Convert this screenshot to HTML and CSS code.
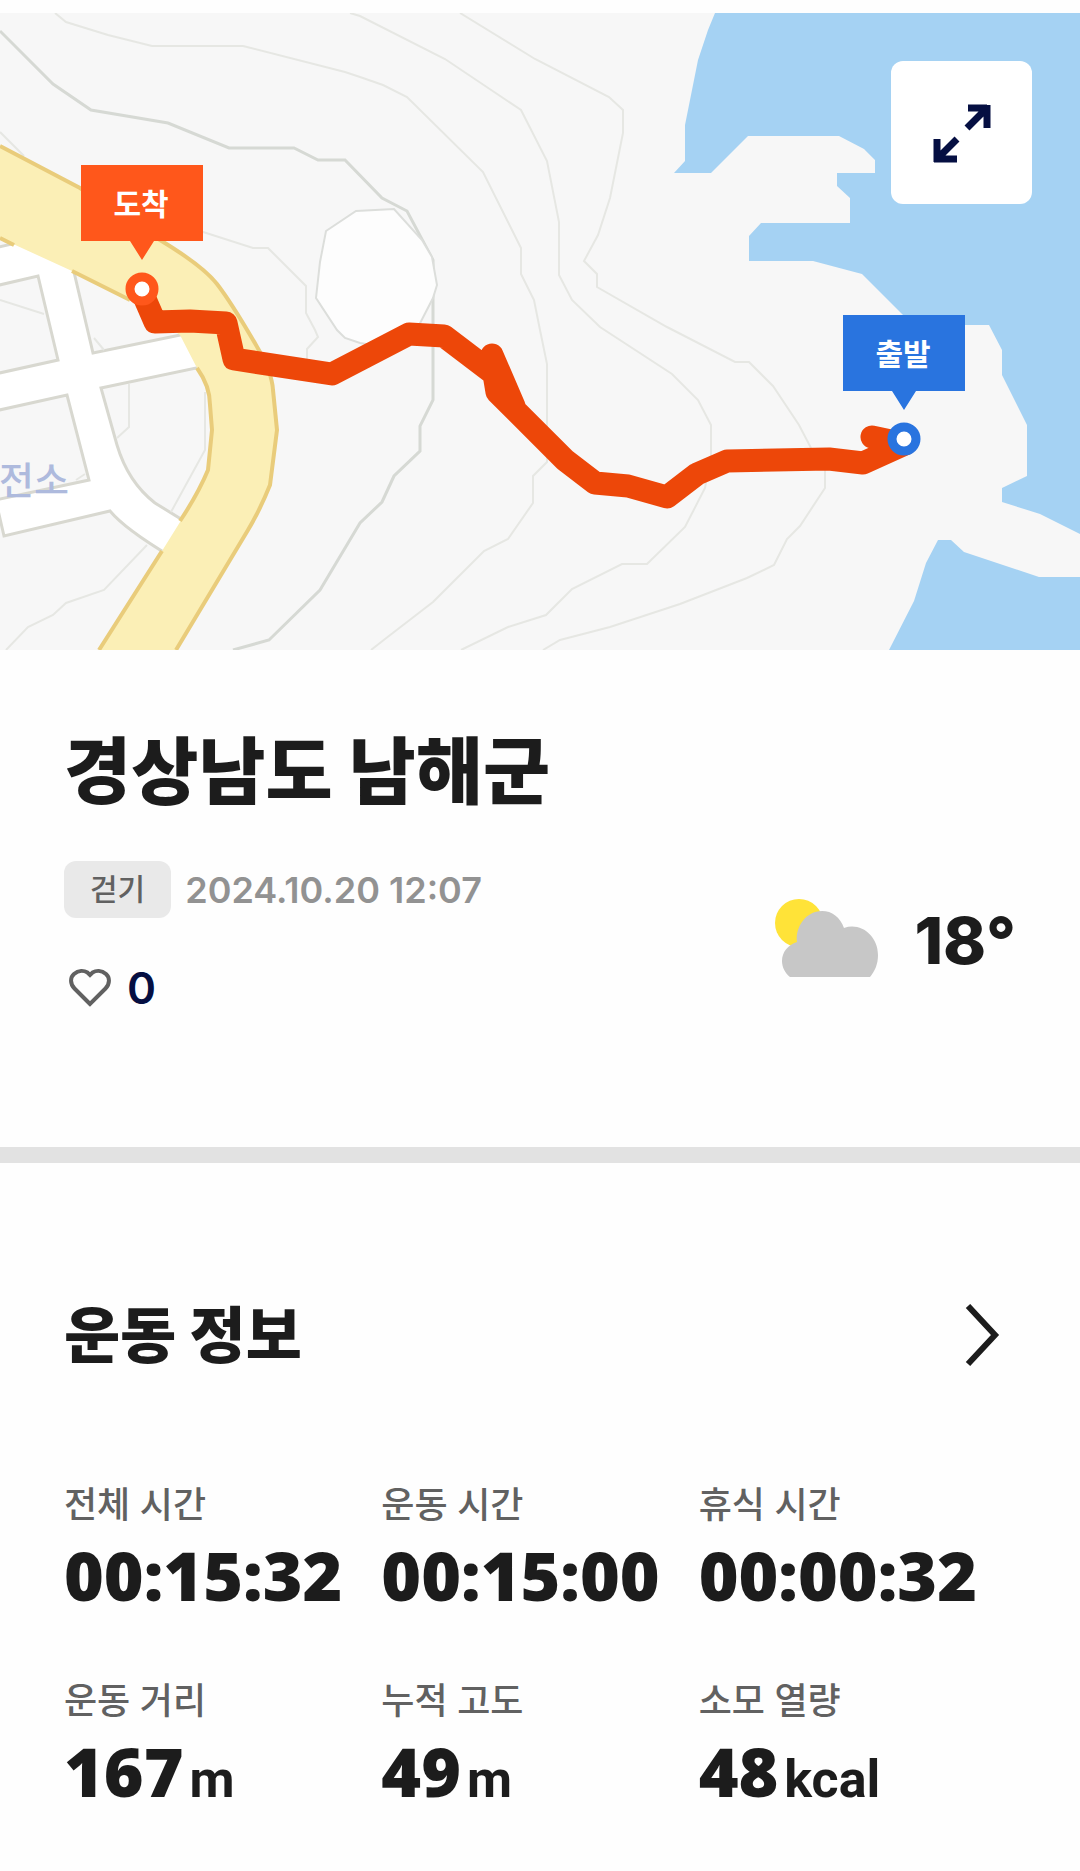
FILE: index.html
```html
<!DOCTYPE html>
<html lang="ko">
<head>
<meta charset="utf-8">
<meta name="viewport" content="width=device-width, initial-scale=1">
<title>경상남도 남해군</title>
<link rel="stylesheet" href="styles.css">
</head>
<body>
<main class="page">
  <section class="map" aria-label="운동 경로">
    <svg class="map-canvas" viewBox="0 13 1080 637" role="img" aria-label="지도">
      <rect class="land" y="13" width="1080" height="637"/>
      <!-- sea -->
      <path class="sea" d="M715 13 708 30 698 60 685 125V161L674 173H711L748 136H839L864 149 875 160V173H837V186L850 198V223H761L749 236V261H813L862 274 913 325H989L1002 350V375L1027 425V476L1002 488V502L1040 514 1080 534V13Z"/>
      <path class="sea" d="M889 650 914 601 926 563 938 540H951L964 552 1039 577H1080V650Z"/>
      <!-- contour lines -->
      <g class="contour">
        <path d="M55 13 66 22 108 35 152 46H243L345 72 360 77 383 85 407 97 483 172 521 248V274L534 300 540 330 547 364V462L533 476V503L508 539 484 551 433 602 385 639 371 650"/>
        <path d="M350 13 360 16 445 59 521 110 547 161 559 222V275L572 300 600 327 672 374 698 400 711 425V455L705 488 685 527 647 564H622L572 589 546 615 508 627 461 650"/>
        <path d="M460 13 535 59 609 97 623 110V133L610 198 598 235 584 261 597 274V287L667 327 735 362H749L773 386 799 425 811 448 825 470V488L800 526 787 539 774 565 747 578 680 604 610 627 560 640 543 650"/>
        <path d="M200 231 253 248H268L306 286V313L315 330 318 337 307 349V360M0 132 24 156"/>
      </g>
      <path class="contour contour-index" d="M0 31 53 84 91 110 168 123 229 148H294L318 160H345L382 198 407 211 433 260V400L420 426V451L394 476 382 502 360 523 320 590 269 640 233 650"/>
      <path class="plot" d="M356 211 394 209 422 240 432 257 437 285 433 298 415 333 385 347 360 343 345 338 337 330 316 298 320 262 326 231Z"/>
      <!-- local streets and blocks -->
      <path class="street" d="M0 247 20 240 80 260 200 340V560H0Z"/>
      <g class="block">
        <path d="M-5 286 38 276 58 360-5 374Z"/>
        <path d="M70 255 93 353 190 333 150 280Z"/>
        <path d="M-5 411 67 395 89 480-5 500Z"/>
        <path d="M101 388 215 364V540L155 503Q128 482 117 445Z"/>
        <path d="M-5 497 4 536 110 511Q125 529 170 556L140 660H-5Z"/>
        <path d="M-5 248 25 241-5 225Z"/>
      </g>
      <path class="contour" d="M0 300 44 314M94 338 104 350M129 384V427L117 438M205 392V450L171 512M147 545 104 590 66 603 53 615 28 627 6 650M76 480 85 474"/>
      <text class="place" x="-1" y="494">전소</text>
      <!-- main road -->
      <path class="road" d="M0 146 80 188 160 240 192 262 217 284 238 312 256 345 270 375 277 430 270 485 248 530 176 650H99L162 551 195 498 208 470 212 430 209 400 204 382 197 368 180 335 130 300 72 271 0 238Z"/>
      <path class="road-edge" d="M0 146 80 188 160 240Q203 266 217 284T256 345Q272 372 273 390L277 430 270 485Q260 510 248 530L176 650M0 238 14 245M72 271 130 300M197 368Q210 386 210 405L212 430 208 470Q198 494 180 521M162 551 99 650"/>
      <!-- recorded route -->
      <path class="route" d="M142 292 155 322 190 321 226 323 234 359 332 374 409 334 444 336 494 374 497 392 565 460 595 483 628 486 667 497 697 474 727 461 829 459 863 463 905 444 872 437M492 355 514 406"/>
      <g class="marker marker-end">
        <path d="M81 165H203V241H154L142 260 130 241H81Z"/>
        <circle cx="142" cy="289" r="12"/>
        <text x="141" y="215">도착</text>
      </g>
      <g class="marker marker-start">
        <path d="M843 315H965V391H916L904 410 892 391H843Z"/>
        <circle cx="904" cy="439" r="12"/>
        <text x="903" y="365">출발</text>
      </g>
    </svg>
    <button class="expand" type="button" aria-label="지도 크게 보기">
      <svg width="60" height="60" viewBox="0 0 60 60" aria-hidden="true">
        <path d="M36 5H55M55 2V25M54 6 35 25M5 36V59M2 56H25M6 55 25 36"/>
      </svg>
    </button>
  </section>

  <section class="summary">
    <h1 class="title">경상남도 남해군</h1>
    <div class="summary-row">
      <div class="facts">
        <div class="meta">
          <span class="badge">걷기</span>
          <time class="date" datetime="2024-10-20T12:07">2024.10.20 12:07</time>
        </div>
        <button class="like" type="button" aria-label="좋아요 0">
          <svg width="42" height="40" viewBox="0 0 42 40" aria-hidden="true">
            <path d="M21 36 5.500 20.500C1 16 1 9.500 5 6C9.500 2 15 2.500 18.500 4.500L21 7L23.500 4.500C27 2.500 32.500 2 37 6C41 9.500 41 16 36.500 20.500Z"/>
          </svg>
          <span>0</span>
        </button>
      </div>
      <div class="weather">
        <svg width="106" height="80" viewBox="0 0 106 80" role="img" aria-label="구름 조금">
          <circle class="sun" cx="25" cy="24" r="24"/>
          <path class="cloud" d="M16 78C11 74 8 68 8 62C8 53 14 46 23 43C21 28 32 12 48 12C58 12 66 18 70 29C87 23 104 37 104 56C104 65 101 72 96 78Z"/>
        </svg>
        <span class="temperature">18°</span>
      </div>
    </div>
  </section>

  <section class="workout">
    <h2 class="section-head">
      <a href="#workout">
        <span>운동 정보</span>
        <svg width="36" height="64" viewBox="0 0 36 64" aria-hidden="true"><path d="M4 2 31 31 4 60"/></svg>
      </a>
    </h2>
    <dl class="stats">
      <div class="stat"><dt>전체 시간</dt><dd>00:15:32</dd></div>
      <div class="stat"><dt>운동 시간</dt><dd>00:15:00</dd></div>
      <div class="stat"><dt>휴식 시간</dt><dd>00:00:32</dd></div>
      <div class="stat"><dt>운동 거리</dt><dd>167<span class="unit">m</span></dd></div>
      <div class="stat"><dt>누적 고도</dt><dd>49<span class="unit">m</span></dd></div>
      <div class="stat"><dt>소모 열량</dt><dd>48<span class="unit">kcal</span></dd></div>
    </dl>
  </section>
</main>
</body>
</html>
```
FILE: styles.css
```css
* { box-sizing: border-box; }

body {
  margin: 0;
  background: #fefefe;
  color: #1c1c1c;
  font-family: Inter, "Noto Sans CJK KR", sans-serif;
}

h1, h2, dl, dd { margin: 0; }

button {
  padding: 0;
  border: 0;
  background: none;
  font: inherit;
  cursor: pointer;
}

.page { padding-top: 13px; }

/* Map */
.map { position: relative; }
.map-canvas { display: block; width: 100%; height: auto; }
.land { fill: #f7f7f7; }
.sea { fill: #a5d2f3; }
.contour { fill: none; stroke: #e6e7e3; stroke-width: 2; }
.contour-index { stroke: #d6d9d4; stroke-width: 3; }
.plot { fill: #fdfdfd; stroke: #dcdedb; stroke-width: 2; }
.street { fill: #fff; }
.block { fill: #f7f7f7; stroke: #d8d8d0; stroke-width: 3; }
.place { fill: #aebadd; font-size: 38px; font-weight: 500; }
.road { fill: #fbefb6; }
.road-edge { fill: none; stroke: #e9cc7b; stroke-width: 4; }
.route {
  fill: none;
  stroke: #ed4709;
  stroke-width: 23;
  stroke-linecap: round;
  stroke-linejoin: round;
}
.marker text { fill: #fff; font-size: 30px; font-weight: 700; text-anchor: middle; }
.marker circle { fill: #fff; stroke-width: 9; }
.marker-end { fill: #ff571b; stroke: none; }
.marker-end circle { stroke: #ff571b; }
.marker-start { fill: #2974df; }
.marker-start circle { stroke: #2974df; }

.expand {
  position: absolute;
  top: 48px;
  right: 48px;
  display: grid;
  place-items: center;
  width: 141px;
  height: 143px;
  border-radius: 12px;
  background: #fff;
}
.expand svg { overflow: visible; fill: none; stroke: #050f42; stroke-width: 7; }

/* Summary */
.summary { padding: 78px 64px 131px; border-bottom: 16px solid #e2e2e2; }
.title { font-size: 73px; font-weight: 800; line-height: 88px; }
.summary-row { display: flex; justify-content: space-between; margin-top: 45px; }
.meta { display: flex; align-items: center; gap: 14px; }
.badge {
  padding: 0 26px;
  border-radius: 12px;
  background: #e9e9e9;
  color: #616161;
  font-size: 30px;
  font-weight: 500;
  line-height: 57px;
}
.date { color: #929292; font-size: 36px; font-weight: 600; }
.like {
  display: flex;
  align-items: center;
  gap: 16px;
  margin: 42px 0 0 5px;
  color: #050f42;
  font-size: 44px;
  font-weight: 600;
  line-height: 56px;
}
.like svg { fill: none; stroke: #616161; stroke-width: 4; }
.weather { display: flex; align-items: center; gap: 34px; }
.sun { fill: #ffe338; }
.cloud { fill: #c7c7c7; }
.temperature { padding-top: 4px; font-size: 65px; font-weight: 800; line-height: 80px; }

/* Workout details */
.workout { padding: 137px 64px 48px; }
.section-head a {
  display: flex;
  align-items: center;
  justify-content: space-between;
  padding-right: 16px;
  color: inherit;
  font-size: 61px;
  font-weight: 800;
  line-height: 72px;
  text-decoration: none;
}
.section-head svg { fill: none; stroke: #1c1c1c; stroke-width: 6; }
.stats {
  display: grid;
  grid-template-columns: repeat(3, 1fr);
  row-gap: 60px;
  margin-top: 107px;
}
.stat dt { color: #616161; font-size: 36px; font-weight: 500; line-height: 52px; }
.stat dd {
  margin-top: 4px;
  font-family: "Open Sans", "Noto Sans CJK KR", sans-serif;
  font-size: 68px;
  font-weight: 800;
  line-height: 80px;
  white-space: nowrap;
}
.unit { margin-left: 6px; font-family: Roboto, sans-serif; font-size: 52px; font-weight: 700; }
```
